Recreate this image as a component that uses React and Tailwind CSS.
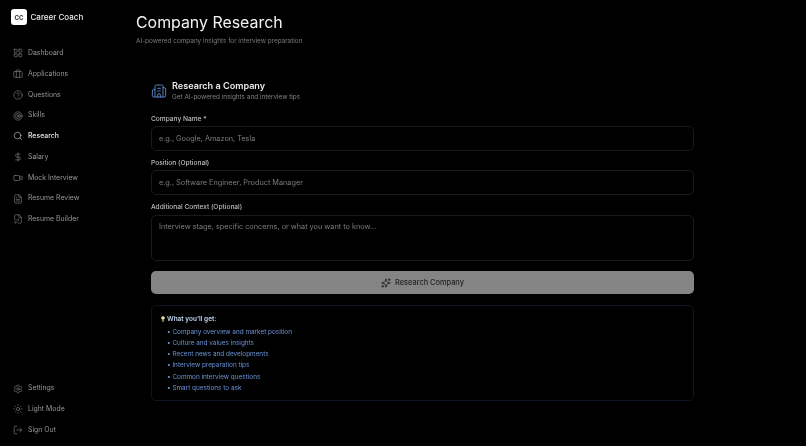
import React from "react";
import {
  LayoutGrid,
  Briefcase,
  CircleHelp,
  Target,
  Search,
  DollarSign,
  Video,
  FileText,
  FilePen,
  Settings,
  Sun,
  LogOut,
  Building2,
  Sparkles,
  Lightbulb,
} from "lucide-react";

const navItems = [
  { label: "Dashboard", icon: LayoutGrid },
  { label: "Applications", icon: Briefcase },
  { label: "Questions", icon: CircleHelp },
  { label: "Skills", icon: Target },
  { label: "Research", icon: Search, active: true },
  { label: "Salary", icon: DollarSign },
  { label: "Mock Interview", icon: Video },
  { label: "Resume Review", icon: FileText },
  { label: "Resume Builder", icon: FilePen },
];

const footerItems = [
  { label: "Settings", icon: Settings },
  { label: "Light Mode", icon: Sun },
  { label: "Sign Out", icon: LogOut },
];

const perks = [
  "Company overview and market position",
  "Culture and values insights",
  "Recent news and developments",
  "Interview preparation tips",
  "Common interview questions",
  "Smart questions to ask",
];

const NavRow = ({ item }) => {
  const Icon = item.icon;
  return (
    <div
      className={`flex items-center h-[20.75px] pl-[13px] gap-[5px] text-[6.9px] ${
        item.active ? "text-[#e5e5e5] font-medium" : "text-[#969696]"
      }`}
    >
      <Icon size={10} strokeWidth={1.3} className="shrink-0" />
      <span>{item.label}</span>
    </div>
  );
};

const Field = ({ label, placeholder, className = "" }) => (
  <div className={className}>
    <div className="pt-[1px] text-[6.6px] font-medium leading-[10px] text-[#bdbdbd]">{label}</div>
    <div className="mt-[2px] flex h-[24.5px] items-center rounded-[5px] border border-[#1a1a1a] px-[7px] pt-[2px] text-[7.3px] text-[#7c7c7c]">
      {placeholder}
    </div>
  </div>
);

export default function App() {
  return (
    <div className="h-[446px] w-[806px] overflow-hidden bg-black">
      <div className="flex h-full w-full font-['Inter',sans-serif] text-white antialiased [will-change:transform]">
        {/* SIDEBAR */}
        <aside className="flex w-[113px] shrink-0 flex-col pb-[5.6px] pt-[9px]">
          <div className="flex items-center gap-[3.5px] pl-[11px]">
            <div className="flex h-[16px] w-[16px] items-center justify-center rounded-[3px] bg-white text-[6px] font-bold text-[#222]">
              CC
            </div>
            <span className="text-[8px] font-medium text-[#ececec]">Career Coach</span>
          </div>
          <nav className="mt-[18px]">
            {navItems.map((item) => (
              <NavRow key={item.label} item={item} />
            ))}
          </nav>
          <div className="mt-auto">
            {footerItems.map((item) => (
              <NavRow key={item.label} item={item} />
            ))}
          </div>
        </aside>

        {/* MAIN */}
        <main className="flex-1 pl-[23px] pt-[12px]">
          <h1 className="text-[15.9px] font-normal leading-[22px] text-[#f2f2f2]">Company Research</h1>
          <p className="mt-[2px] text-[6.4px] leading-[10px] text-[#7a7a7a]">
            AI-powered company insights for interview preparation
          </p>

          <div className="ml-[15px] mt-[34px] w-[543px]">
            <div className="flex items-center gap-[5px]">
              <Building2 size={16} strokeWidth={1.3} className="text-[#5f93dc]" />
              <div>
                <div className="text-[9.1px] font-semibold leading-[12px] text-[#ececec]">Research a Company</div>
                <div className="text-[6.4px] leading-[10px] text-[#808080]">Get AI-powered insights and interview tips</div>
              </div>
            </div>

            <Field className="mt-[11px]" label="Company Name *" placeholder="e.g., Google, Amazon, Tesla" />
            <Field className="mt-[6.5px]" label="Position (Optional)" placeholder="e.g., Software Engineer, Product Manager" />

            <div className="mt-[6.5px]">
              <div className="pt-[1px] text-[6.6px] font-medium leading-[10px] text-[#bdbdbd]">Additional Context (Optional)</div>
              <div className="mt-[3px] h-[46px] rounded-[5px] border border-[#1a1a1a] px-[7px] pt-[5px] text-[7.3px] leading-[12px] text-[#7c7c7c]">
                Interview stage, specific concerns, or what you want to know...
              </div>
            </div>

            <div className="mt-[10px] flex h-[23px] items-center justify-center gap-[4px] rounded-[5px] bg-[#848484] text-[7.4px] font-medium text-[#1f1f1f]">
              <Sparkles size={10} strokeWidth={2} />
              Research Company
            </div>

            <div className="mt-[11px] h-[96px] rounded-[5px] border border-[#0d1426] pl-[8px] pt-[7.5px]">
              <div className="flex items-center gap-[1px] text-[6.5px] font-semibold leading-[10px] text-[#c2d4f2]">
                <Lightbulb size={6} strokeWidth={2} className="fill-[#f4e9a8] text-[#f4e9a8]" />
                What you'll get:
              </div>
              <ul className="mt-[3px] pl-[7px]">
                {perks.map((perk) => (
                  <li key={perk} className="text-[6.4px] leading-[11.3px] text-[#6b92d4]">
                    • {perk}
                  </li>
                ))}
              </ul>
            </div>
          </div>
        </main>
      </div>
    </div>
  );
}
